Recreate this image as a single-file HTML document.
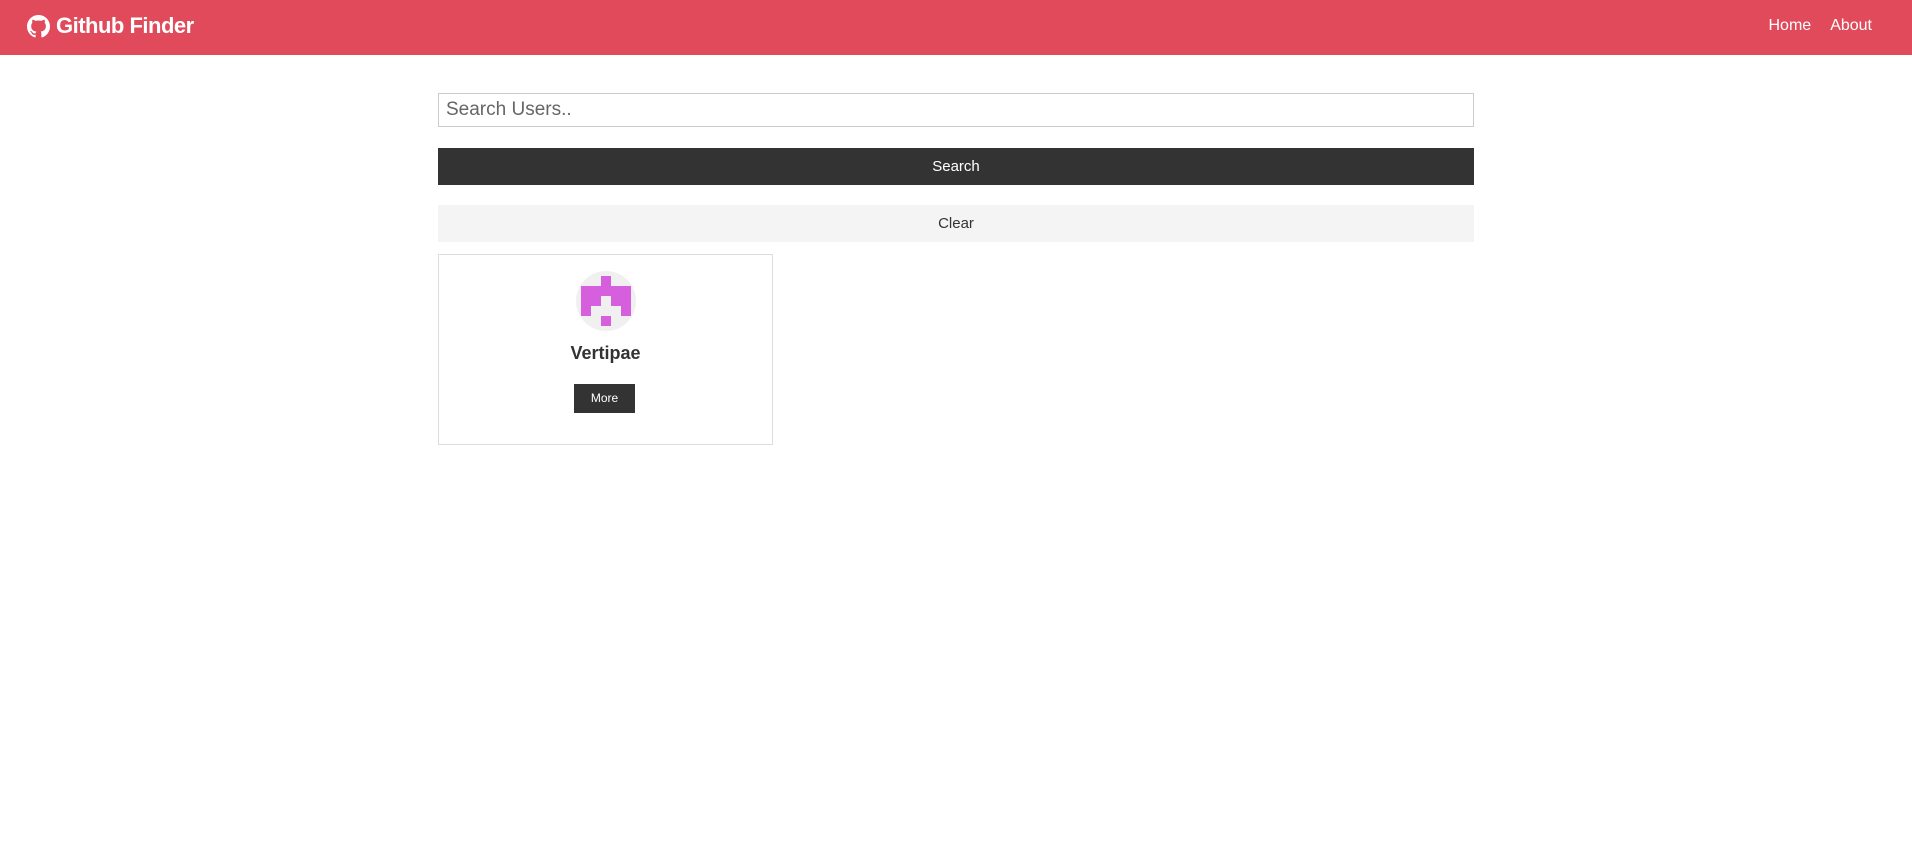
<!DOCTYPE html>
<html><head><meta charset="utf-8"><style>
*{box-sizing:border-box;margin:0;padding:0}
body{width:1912px;height:853px;background:#fff;font-family:"Liberation Sans",Arial,sans-serif;color:#333;overflow:hidden}
.nav{height:55px;background:#e14a5a;position:relative;color:#fff}
.logo{position:absolute;left:27px;top:13px;display:flex;align-items:center;font-size:22px;font-weight:bold;letter-spacing:-0.5px}
.logo svg{margin-right:6px}
.links{position:absolute;right:40px;top:17px;font-size:16px}
.links span{margin-left:19px}
.box{position:absolute;left:438px;width:1036px}
.inp{top:93px;height:34px;border:1px solid #ccc;font-size:19px;color:#666;padding:5px 7px;line-height:22px}
.btn{height:37px;line-height:37px;text-align:center;font-size:15px}
.card{position:absolute;left:438px;top:254px;width:335px;height:191px;border:1px solid #ddd;text-align:center}
.av{position:absolute;left:137px;top:16px}
.name{position:absolute;left:0;right:0;top:88px;font-size:18px;font-weight:bold;color:#333}
.more{position:absolute;left:135px;top:129px;width:61px;height:29px;background:#333;color:#fff;font-size:12px;line-height:29px}
</style></head><body>
<div class="nav">
<div class="logo"><svg width="23" height="23" viewBox="0 0 16 16"><path fill="#fff" d="M8 0C3.58 0 0 3.58 0 8c0 3.54 2.29 6.53 5.47 7.59.4.07.55-.17.55-.38 0-.19-.01-.82-.01-1.49-2.01.37-2.530-.49-2.69-.94-.09-.23-.48-.94-.82-1.13-.28-.15-.68-.52-.01-.53.63-.01 1.080.58 1.23.82.72 1.21 1.870.87 2.33.66.07-.52.28-.87.51-1.07-1.78-.2-3.64-.89-3.64-3.95 0-.87.31-1.59.82-2.15-.08-.2-.36-1.02.08-2.12 0 0 .67-.21 2.2.82.64-.18 1.32-.27 2-.27.68 0 1.36.09 2 .27 1.53-1.04 2.2-.82 2.2-.82.44 1.1.16 1.92.08 2.12.51.56.82 1.27.82 2.15 0 3.07-1.87 3.75-3.65 3.95.29.25.54.73.54 1.48 0 1.07-.01 1.93-.01 2.2 0 .21.15.46.55.38A8.013 8.013 0 0016 8c0-4.42-3.58-8-8-8z"/></svg>Github Finder</div>
<div class="links"><span>Home</span><span>About</span></div>
</div>
<div class="box inp">Search Users..</div>
<div class="box btn" style="top:148px;background:#333;color:#fff">Search</div>
<div class="box btn" style="top:205px;background:#f4f4f4;color:#333">Clear</div>
<div class="card">
<svg class="av" width="60" height="60" viewBox="0 0 60 60"><circle cx="30" cy="30" r="30" fill="#f0f0f0"/><g fill="#d65fdd">
<rect x="25" y="5" width="10" height="10"/><rect x="5" y="15" width="50" height="10"/>
<rect x="5" y="25" width="20" height="10"/><rect x="35" y="25" width="20" height="10"/>
<rect x="5" y="35" width="10" height="10"/><rect x="45" y="35" width="10" height="10"/>
<rect x="25" y="45" width="10" height="10"/></g></svg>
<div class="name">Vertipae</div>
<div class="more">More</div>
</div>
</body></html>
